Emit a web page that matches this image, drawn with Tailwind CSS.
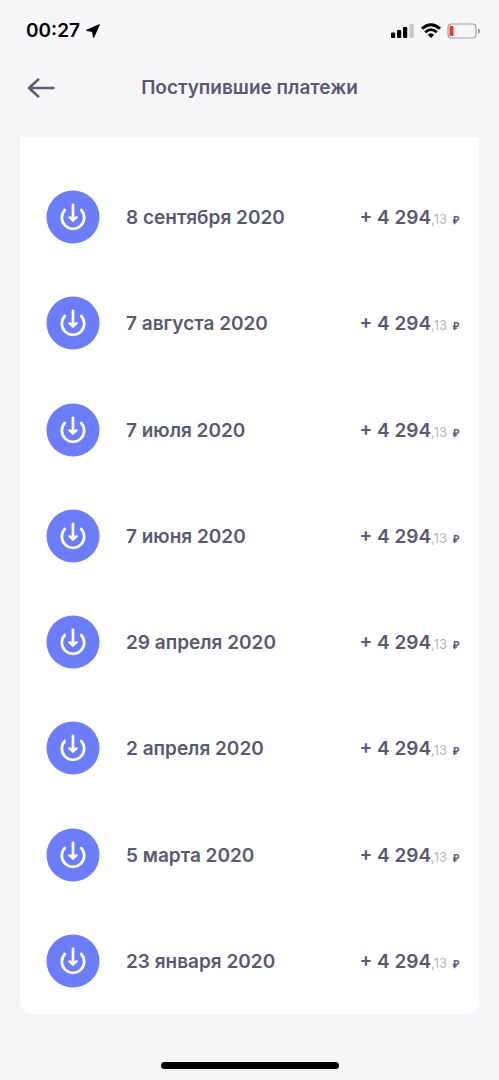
<!DOCTYPE html>
<html lang="ru">
<head>
<meta charset="utf-8">
<meta name="viewport" content="width=device-width, initial-scale=1">
<title>Поступившие платежи</title>
<script src="https://cdn.jsdelivr.net/npm/@tailwindcss/browser@4"></script>
</head>
<body class="flex min-h-screen flex-col bg-[#f6f6f9] font-['Inter','Noto_Sans',sans-serif] text-[#585a73]">

<div class="flex h-[62px] items-center justify-between pr-[18px] pl-[26px] text-black">
  <div class="flex items-center gap-[6px]">
    <span class="text-[19px] leading-6 font-semibold">00:27</span>
    <svg class="h-[14px] w-[14px]" viewBox="0 0 14 14" aria-hidden="true"><path d="M13.200 .8 .8 6.300 6.600 7.400 7.600 13.200Z" fill="#000" stroke="#000" stroke-width="1.200" stroke-linejoin="round"/></svg>
  </div>
  <div class="flex items-center gap-[6px] pr-px">
    <svg class="h-4 w-[24px]" viewBox="0 0 24 16" aria-hidden="true">
      <rect x="0" y="9.500" width="4.200" height="5.500" rx="1"/><rect x="6" y="7" width="4.200" height="8" rx="1"/><rect x="12" y="4" width="4.200" height="11" rx="1"/><rect x="18.500" y="1" width="4.200" height="14" rx="1" fill="#c9c9cb"/>
    </svg>
    <svg class="h-4 w-5" viewBox="0 0 20 16" fill="none" stroke="#000" aria-hidden="true">
      <path d="M1 5.700Q10 -2.300 19 5.700" stroke-width="3"/><path d="M4.200 9.200Q10 4 15.800 9.200" stroke-width="2.800"/><path d="M6.800 11.800Q10 8.800 13.200 11.800L10 15Z" fill="#000" stroke="none"/>
    </svg>
    <svg class="h-4 w-[33px]" viewBox="0 0 33 16" aria-hidden="true">
      <rect x="1" y="1" width="28" height="14" rx="3.500" fill="none" stroke="#a09fa4" stroke-width="1.200"/><rect x="2.500" y="3" width="4" height="10" rx="1" fill="#e8372e"/><path d="M31 5.500Q33 6 33 8T31 10.500Z" fill="#929196"/>
    </svg>
  </div>
</div>

<header class="grid h-[51px] grid-cols-[1fr_auto_1fr] items-center px-[27px]">
  <button type="button" aria-label="Назад" class="h-5 w-7">
    <svg class="h-5 w-7" viewBox="0 0 28 20" fill="none" stroke="#5b5d7a" stroke-width="2.400" stroke-linecap="round" stroke-linejoin="round" aria-hidden="true"><path d="M26.500 10H2M11.300 1.500 2 10 11.300 18.500"/></svg>
  </button>
  <h1 class="text-[19px] leading-6 font-semibold">Поступившие платежи</h1>
</header>

<main class="mx-5 mt-6 mb-12 flex flex-1 flex-col rounded-b-xl bg-white pt-[53px] pr-5 pb-[26px] pl-[26px]">
  <ul id="payments" class="flex flex-1 flex-col justify-between gap-5"></ul>
</main>

<div class="mx-auto mb-[11px] h-[7px] w-[178px] rounded-full bg-black"></div>

<template id="payment">
  <li class="flex items-center">
    <svg class="h-[54px] w-[54px] shrink-0" viewBox="0 0 54 54" fill="none" aria-hidden="true">
      <circle cx="27" cy="27" r="26.500" fill="#6b7dfa"/>
      <path d="M18.800 20A11.200 11.200 0 1 0 35.200 20" stroke="#fff" stroke-width="2.700" stroke-linecap="round"/>
      <path d="M27 14.800V30" stroke="#fff" stroke-width="2.700" stroke-linecap="round"/>
      <path d="M23.200 27.300 27 30.800 30.800 27.300 27 28.300Z" fill="#fff" stroke="#fff" stroke-width="2.200" stroke-linecap="round" stroke-linejoin="round"/>
    </svg>
    <div class="ml-[26px] flex flex-1 items-baseline justify-between pt-[2px] text-[19px] leading-7 font-semibold">
      <time></time>
      <span class="flex items-baseline whitespace-nowrap"><span>+ 4&nbsp;294</span><span class="text-[13px] leading-4 font-normal text-[#b5b6c2]">,13</span><span class="ml-[6px] font-['Liberation_Sans',sans-serif] text-[11px] leading-4 font-bold">₽</span></span>
    </div>
  </li>
</template>

<script>
  const dates = [
    ['2020-09-08', '8 сентября 2020'],
    ['2020-08-07', '7 августа 2020'],
    ['2020-07-07', '7 июля 2020'],
    ['2020-06-07', '7 июня 2020'],
    ['2020-04-29', '29 апреля 2020'],
    ['2020-04-02', '2 апреля 2020'],
    ['2020-03-05', '5 марта 2020'],
    ['2020-01-23', '23 января 2020']
  ];
  const list = document.getElementById('payments');
  const template = document.getElementById('payment');
  for (const [iso, label] of dates) {
    const row = template.content.cloneNode(true);
    const time = row.querySelector('time');
    time.dateTime = iso;
    time.textContent = label;
    list.append(row);
  }
</script>
</body>
</html>
